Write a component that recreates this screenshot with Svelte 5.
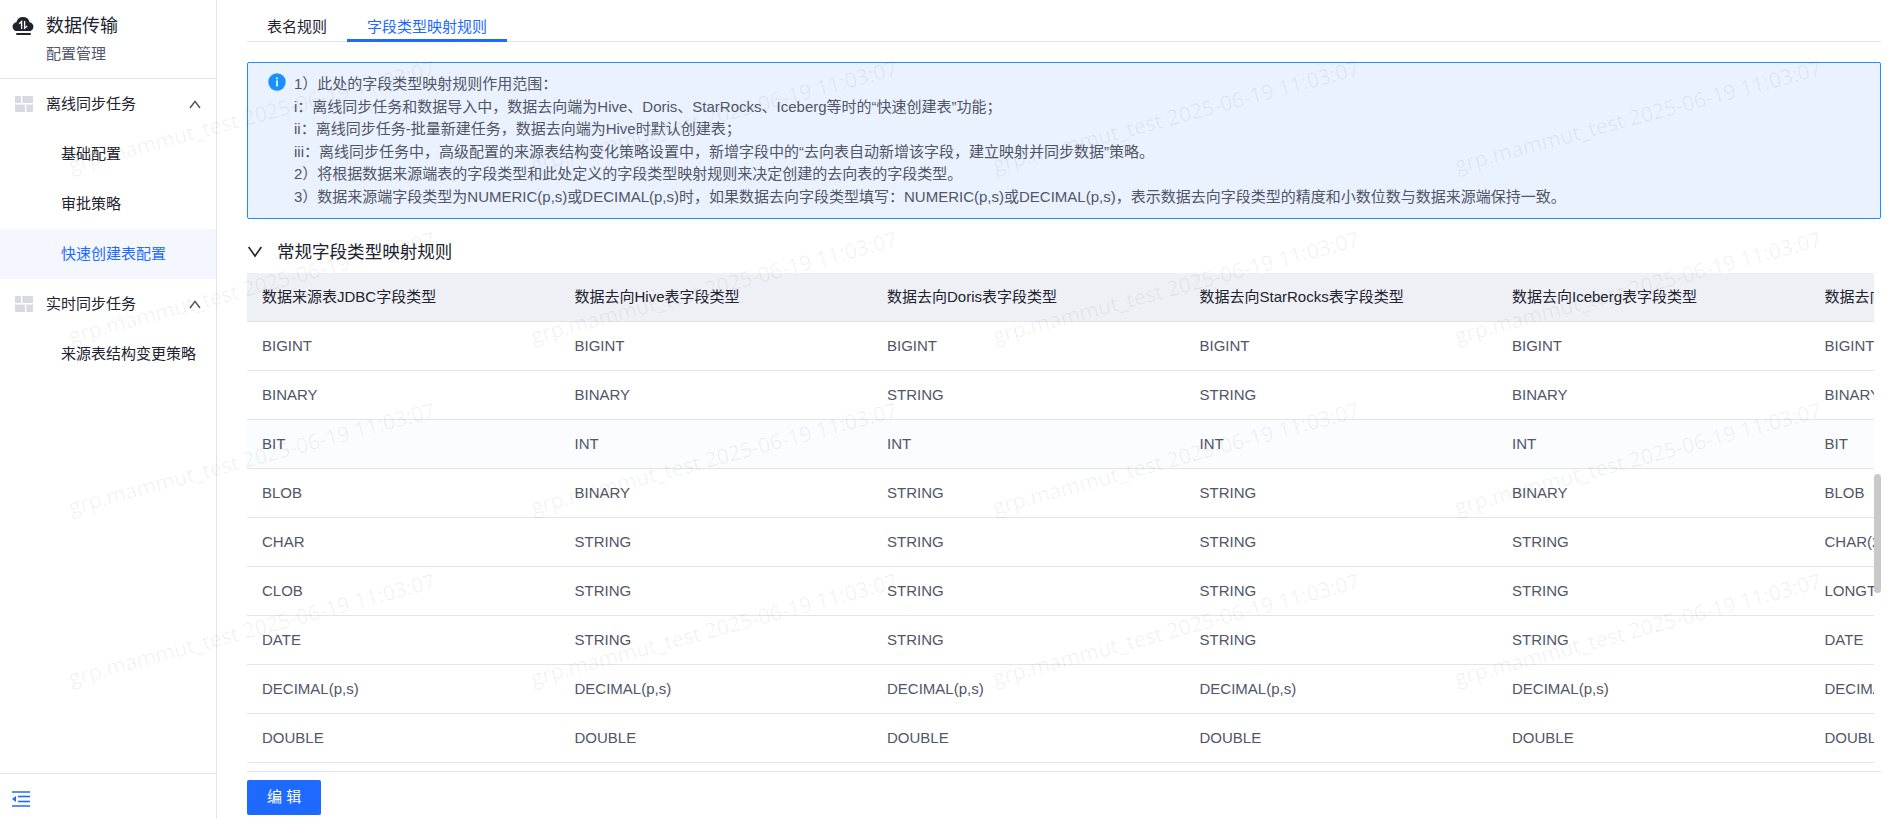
<script lang="ts">
  interface MenuItem {
    label: string;
    active?: boolean;
  }

  interface MenuGroup {
    label: string;
    open: boolean;
    items: MenuItem[];
  }

  let groups: MenuGroup[] = $state([
    {
      label: '离线同步任务',
      open: true,
      items: [{ label: '基础配置' }, { label: '审批策略' }, { label: '快速创建表配置', active: true }]
    },
    {
      label: '实时同步任务',
      open: true,
      items: [{ label: '来源表结构变更策略' }]
    }
  ]);

  const tabs = ['表名规则', '字段类型映射规则'];
  let activeTab = $state(1);

  const notes = [
    '1）此处的字段类型映射规则作用范围：',
    'i：离线同步任务和数据导入中，数据去向端为Hive、Doris、StarRocks、Iceberg等时的“快速创建表”功能；',
    'ii：离线同步任务-批量新建任务，数据去向端为Hive时默认创建表；',
    'iii：离线同步任务中，高级配置的来源表结构变化策略设置中，新增字段中的“去向表自动新增该字段，建立映射并同步数据”策略。',
    '2）将根据数据来源端表的字段类型和此处定义的字段类型映射规则来决定创建的去向表的字段类型。',
    '3）数据来源端字段类型为NUMERIC(p,s)或DECIMAL(p,s)时，如果数据去向字段类型填写：NUMERIC(p,s)或DECIMAL(p,s)，表示数据去向字段类型的精度和小数位数与数据来源端保持一致。'
  ];

  const columns = [
    '数据来源表JDBC字段类型',
    '数据去向Hive表字段类型',
    '数据去向Doris表字段类型',
    '数据去向StarRocks表字段类型',
    '数据去向Iceberg表字段类型',
    '数据去向MySQL表字段类型'
  ];

  const rows = [
    ['BIGINT', 'BIGINT', 'BIGINT', 'BIGINT', 'BIGINT', 'BIGINT'],
    ['BINARY', 'BINARY', 'STRING', 'STRING', 'BINARY', 'BINARY'],
    ['BIT', 'INT', 'INT', 'INT', 'INT', 'BIT'],
    ['BLOB', 'BINARY', 'STRING', 'STRING', 'BINARY', 'BLOB'],
    ['CHAR', 'STRING', 'STRING', 'STRING', 'STRING', 'CHAR(255)'],
    ['CLOB', 'STRING', 'STRING', 'STRING', 'STRING', 'LONGTEXT'],
    ['DATE', 'STRING', 'STRING', 'STRING', 'STRING', 'DATE'],
    ['DECIMAL(p,s)', 'DECIMAL(p,s)', 'DECIMAL(p,s)', 'DECIMAL(p,s)', 'DECIMAL(p,s)', 'DECIMAL(p,s)'],
    ['DOUBLE', 'DOUBLE', 'DOUBLE', 'DOUBLE', 'DOUBLE', 'DOUBLE']
  ];

  let currentRow = $state(2);
  let sectionOpen = $state(true);

  const watermark = 'grp.mammut_test 2025-06-19 11:03:07';
</script>

<div class="page">
  <aside class="sidebar">
    <header class="brand">
      <svg class="brand-logo" width="22" height="20" viewBox="0 0 22 20">
        <path d="M5.6 15A4.4 4.4 0 0 1 4.4 6.2 A6.8 6.8 0 0 1 17.6 6.2 A4.4 4.4 0 0 1 16.4 15Z" fill="#20232e" />
        <rect x="4" y="17" width="15" height="2" rx="1" fill="#20232e" />
        <path d="M7.2 7.8 L9.6 5.6 V13" fill="none" stroke="#fff" stroke-width="1.3" />
        <path d="M12.6 5 V12.2 L15.2 10" fill="none" stroke="#fff" stroke-width="1.3" />
      </svg>
      <div>
        <h1>数据传输</h1>
        <p>配置管理</p>
      </div>
    </header>

    <nav class="menu">
      {#each groups as group}
        <button class="menu-group" type="button" aria-expanded={group.open} onclick={() => (group.open = !group.open)}>
          <svg class="menu-icon" width="18" height="16" viewBox="0 0 18 16" fill="#d8d9e3">
            <rect x="0" y="0" width="6" height="7" />
            <rect x="7.4" y="0" width="10.6" height="7" />
            <rect x="0" y="8.6" width="10" height="7.4" />
            <rect x="11.4" y="8.6" width="6.6" height="7.4" />
          </svg>
          <span>{group.label}</span>
          <svg class="menu-arrow" class:closed={!group.open} width="12" height="10" viewBox="0 0 12 10">
            <path d="M1 9 L6 2.4 L11 9" fill="none" stroke="#4a4d58" stroke-width="1.4" />
          </svg>
        </button>
        {#if group.open}
          {#each group.items as item}
            <a class="menu-item" class:active={item.active} href="#menu">{item.label}</a>
          {/each}
        {/if}
      {/each}
    </nav>

    <div class="sidebar-foot">
      <button type="button" aria-label="收起菜单">
        <svg width="18" height="16" viewBox="0 0 18 16" fill="#1e6aff">
          <rect x="0" y="0" width="18" height="2" opacity="0.75" />
          <rect x="6" y="4.7" width="12" height="1.6" />
          <rect x="6" y="9.7" width="12" height="1.6" />
          <rect x="0" y="14" width="18" height="2" opacity="0.75" />
          <path d="M0 8 L4 5 V11Z" />
        </svg>
      </button>
    </div>
  </aside>

  <main class="content">
    <div class="tabs" role="tablist">
      {#each tabs as tab, i}
        <button type="button" role="tab" class:active={activeTab === i} aria-selected={activeTab === i} onclick={() => (activeTab = i)}>
          {tab}
        </button>
      {/each}
    </div>

    <div class="notice">
      <svg width="18" height="18" viewBox="0 0 18 18">
        <circle cx="9" cy="9" r="8.7" fill="#1890ff" />
        <rect x="8.2" y="4.4" width="1.6" height="1.8" fill="#fff" />
        <rect x="8.2" y="7.4" width="1.6" height="6" fill="#fff" />
      </svg>
      <div>
        {#each notes as note}
          <p>{note}</p>
        {/each}
      </div>
    </div>

    <h3 class="section-title">
      <button type="button" aria-expanded={sectionOpen} onclick={() => (sectionOpen = !sectionOpen)}>
        <svg class:closed={!sectionOpen} width="16" height="12" viewBox="0 0 16 12">
          <path d="M1.6 1 L8 10 L14.4 1" fill="none" stroke="#22252f" stroke-width="1.6" />
        </svg>
        常规字段类型映射规则
      </button>
    </h3>

    <div class="scroll">
      <div class="table-wrap">
        {#if sectionOpen}
          <table>
            <thead>
              <tr>
                {#each columns as column}
                  <th scope="col">{column}</th>
                {/each}
              </tr>
            </thead>
            <tbody>
              {#each rows as row, i}
                <tr class:current={currentRow === i} onmouseenter={() => (currentRow = i)}>
                  {#each row as cell}
                    <td>{cell}</td>
                  {/each}
                </tr>
              {/each}
            </tbody>
          </table>
        {/if}
      </div>
      <div class="track"><div class="thumb"></div></div>
    </div>

    <footer class="actions">
      <button type="button">编 辑</button>
    </footer>
  </main>

  <div class="watermark" aria-hidden="true">
    {#each { length: 16 } as _}
      <div><span>{watermark}</span></div>
    {/each}
  </div>
</div>

<style>
  :global(body) {
    margin: 0;
  }

  .page {
    --blue: #1e6aff;
    --text: #20232e;
    --muted: #505667;
    --line: #e3e4ea;

    position: relative;
    display: flex;
    height: 100vh;
    overflow: hidden;
    background: #fff;
    color: var(--text);
    font-family: 'Liberation Sans', 'Noto Sans CJK SC', sans-serif;
    font-size: 15px;
    line-height: 1.5;
  }

  h1, h3, p {
    margin: 0;
    font-weight: 400;
  }

  button {
    padding: 0;
    border: 0;
    background: none;
    color: inherit;
    font: inherit;
    cursor: pointer;
  }

  svg {
    display: block;
    flex-shrink: 0;
  }

  /* Sidebar */
  .sidebar {
    display: flex;
    flex-direction: column;
    flex-shrink: 0;
    width: 216px;
    border-right: 1px solid var(--line);
  }

  .brand {
    display: flex;
    gap: 12px;
    padding: 10px 12px 12px;
    border-bottom: 1px solid var(--line);
  }

  .brand-logo {
    margin-top: 6px;
  }

  .brand h1 {
    font-size: 18px;
    line-height: 32px;
  }

  .brand p {
    color: var(--muted);
    line-height: 24px;
  }

  .menu {
    flex: 1;
  }

  .menu-group {
    display: flex;
    align-items: center;
    width: 100%;
    height: 50px;
    padding: 0 15px;
  }

  .menu-icon {
    margin-right: 13px;
  }

  .menu-arrow {
    margin-left: auto;
  }

  .closed {
    transform: rotate(180deg);
  }

  .menu-item {
    display: block;
    padding-left: 61px;
    color: var(--text);
    line-height: 50px;
    text-decoration: none;
  }

  .menu-item.active {
    background: #f4f7ff;
    color: var(--blue);
  }

  .sidebar-foot {
    display: flex;
    align-items: center;
    height: 45px;
    padding: 0 12px;
    border-top: 1px solid var(--line);
  }

  .sidebar-foot button {
    padding-top: 5px;
  }

  /* Content */
  .content {
    display: flex;
    flex: 1;
    flex-direction: column;
    min-width: 0;
    padding: 0 17px 0 30px;
  }

  .tabs {
    display: flex;
    height: 42px;
    box-shadow: inset 0 -1px var(--line);
  }

  .tabs button {
    padding: 15px 20px 0;
    border-bottom: 3px solid transparent;
  }

  .tabs button.active {
    border-color: var(--blue);
    color: var(--blue);
  }

  .notice {
    display: flex;
    gap: 8px;
    margin-top: 20px;
    padding: 10px 20px;
    border: 1px solid #1890ff;
    border-radius: 2px;
    background: #eaf1ff;
    color: var(--muted);
  }

  .section-title {
    margin-top: 20px;
    line-height: 26px;
  }

  .section-title button {
    display: flex;
    align-items: center;
    gap: 14px;
  }

  .scroll {
    display: flex;
    flex: 1;
    min-height: 0;
    margin-top: 8px;
  }

  .table-wrap {
    flex: 1;
    min-width: 0;
    overflow: hidden;
  }

  /* six equal columns, wider than the viewport */
  table {
    width: 1875px;
    border-spacing: 0;
    table-layout: fixed;
  }

  th, td {
    height: 48px;
    padding: 0 15px;
    border-bottom: 1px solid var(--line);
    font-weight: 400;
    text-align: left;
    white-space: nowrap;
  }

  th {
    background: #eff0f6;
  }

  td {
    color: var(--muted);
  }

  .current td {
    background: #fafcff;
  }

  .track {
    position: relative;
    width: 7px;
  }

  .thumb {
    position: absolute;
    top: 201px;
    width: 7px;
    height: 119px;
    border-radius: 4px;
    background: #c9c9c9;
  }

  .actions {
    padding: 8px 0 4px;
    border-top: 1px solid var(--line);
  }

  .actions button {
    display: block;
    height: 35px;
    padding: 0 20px;
    border-radius: 2px;
    background: var(--blue);
    color: #fff;
  }

  .watermark {
    position: absolute;
    inset: 0;
    display: grid;
    grid-template-columns: repeat(4, 462px);
    grid-auto-rows: 171px;
    padding: 31px 21px;
    overflow: hidden;
    color: rgba(0, 0, 0, 0.06);
    font-family: 'Open Sans', sans-serif;
    font-size: 21px;
    pointer-events: none;
  }

  .watermark div {
    display: grid;
    place-items: center;
  }

  .watermark span {
    transform: rotate(-15deg);
    white-space: nowrap;
  }
</style>
